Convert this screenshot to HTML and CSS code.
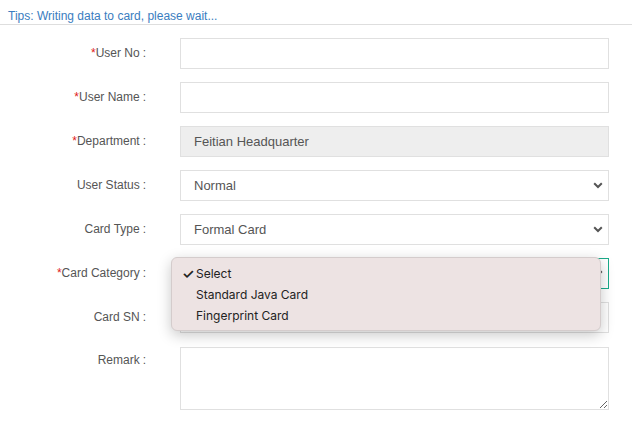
FILE: index.html
```html
<!DOCTYPE html>
<html>
<head>
<meta charset="utf-8">
<link rel="stylesheet" href="styles.css">
</head>
<body>
<div class="tips">Tips: Writing data to card, please wait...</div>
<form class="form">
  <div class="row">
    <label class="label"><span class="req">*</span>User No<span class="colon">:</span></label>
    <div class="field"><input class="ctrl" type="text"></div>
  </div>
  <div class="row">
    <label class="label"><span class="req">*</span>User Name<span class="colon">:</span></label>
    <div class="field"><input class="ctrl" type="text"></div>
  </div>
  <div class="row">
    <label class="label"><span class="req">*</span>Department<span class="colon">:</span></label>
    <div class="field"><input class="ctrl disabled" type="text" value="Feitian Headquarter" readonly></div>
  </div>
  <div class="row">
    <label class="label">User Status<span class="colon">:</span></label>
    <div class="field">
      <div class="ctrl select">Normal</div>
      <svg class="chev" width="10" height="7" viewBox="0 0 10 7"><path d="M1.2 1.3 L5 5 L8.8 1.3" fill="none" stroke="#555" stroke-width="2"/></svg>
    </div>
  </div>
  <div class="row">
    <label class="label">Card Type<span class="colon">:</span></label>
    <div class="field">
      <div class="ctrl select">Formal Card</div>
      <svg class="chev" width="10" height="7" viewBox="0 0 10 7"><path d="M1.2 1.3 L5 5 L8.8 1.3" fill="none" stroke="#555" stroke-width="2"/></svg>
    </div>
  </div>
  <div class="row">
    <label class="label"><span class="req">*</span>Card Category<span class="colon">:</span></label>
    <div class="field">
      <div class="ctrl select focus"></div>
      <svg class="chev" width="10" height="7" viewBox="0 0 10 7"><path d="M1.2 1.3 L5 5 L8.8 1.3" fill="none" stroke="#555" stroke-width="2"/></svg>
    </div>
  </div>
  <div class="row">
    <label class="label">Card SN<span class="colon">:</span></label>
    <div class="field"><input class="ctrl" type="text"></div>
  </div>
  <div class="row row-top">
    <label class="label">Remark<span class="colon">:</span></label>
    <div class="field"><textarea class="ctrl area"></textarea></div>
  </div>
</form>
<div class="menu">
  <div class="opt"><span class="check">✓</span>Select</div>
  <div class="opt">Standard Java Card</div>
  <div class="opt">Fingerprint Card</div>
</div>
</body>
</html>
```
FILE: styles.css
```css
* { box-sizing: border-box; }
html, body { margin: 0; padding: 0; background: #fff; }
body {
  font-family: "Liberation Sans", Arial, sans-serif;
  font-size: 12px;
  color: #555;
  position: relative;
  width: 632px;
  height: 427px;
  overflow: hidden;
}
.tips {
  height: 25px;
  padding: 9px 0 0 8px;
  color: #3a7dc0;
  font-size: 12px;
  line-height: 14px;
  border-bottom: 1px solid #dedede;
}
.form { padding-top: 13px; }
.row {
  display: flex;
  align-items: center;
  margin-bottom: 13px;
}
.row-top { align-items: flex-start; padding-top: 1px; }
.row-top .label { padding-top: 6px; }
.label {
  width: 152px;
  text-align: right;
  color: #555;
  font-size: 12px;
  line-height: 14px;
  padding-bottom: 2px;
  white-space: nowrap;
}
.colon {
  display: inline-block;
  padding: 0 6px 0 3px;
}
.req { color: #e02020; }
.field {
  position: relative;
  margin-left: 28px;
  width: 429px;
}
.ctrl {
  display: block;
  width: 100%;
  height: 31px;
  margin: 0;
  border: 1px solid #e0e0e0;
  border-radius: 0;
  background: #fff;
  padding: 0 13px;
  font-family: "Liberation Sans", Arial, sans-serif;
  font-size: 13px;
  color: #555;
  outline: none;
  line-height: 29px;
}
.disabled { background: #eee; }
.select { -webkit-appearance: none; appearance: none; }
.focus { border-color: #1aab8a; }
.chev {
  position: absolute;
  right: 6px;
  top: 12px;
}
.area {
  height: 63px;
  resize: both;
  line-height: 16px;
  padding: 6px 13px;
}
.menu {
  position: absolute;
  left: 171px;
  top: 257px;
  width: 430px;
  height: 74px;
  background: #ede3e3;
  border: 1px solid #d4cccc;
  border-radius: 6px;
  box-shadow: 0 4px 14px rgba(0, 0, 0, 0.22);
  padding: 5px 0 0 0;
  font-family: Inter, "Noto Sans", sans-serif;
  font-size: 12px;
  color: #222;
}
.opt {
  height: 21px;
  line-height: 21px;
  padding-left: 24px;
  position: relative;
}
.check {
  position: absolute;
  left: 10px;
  font-size: 14px;
  font-weight: 600;
}
```
